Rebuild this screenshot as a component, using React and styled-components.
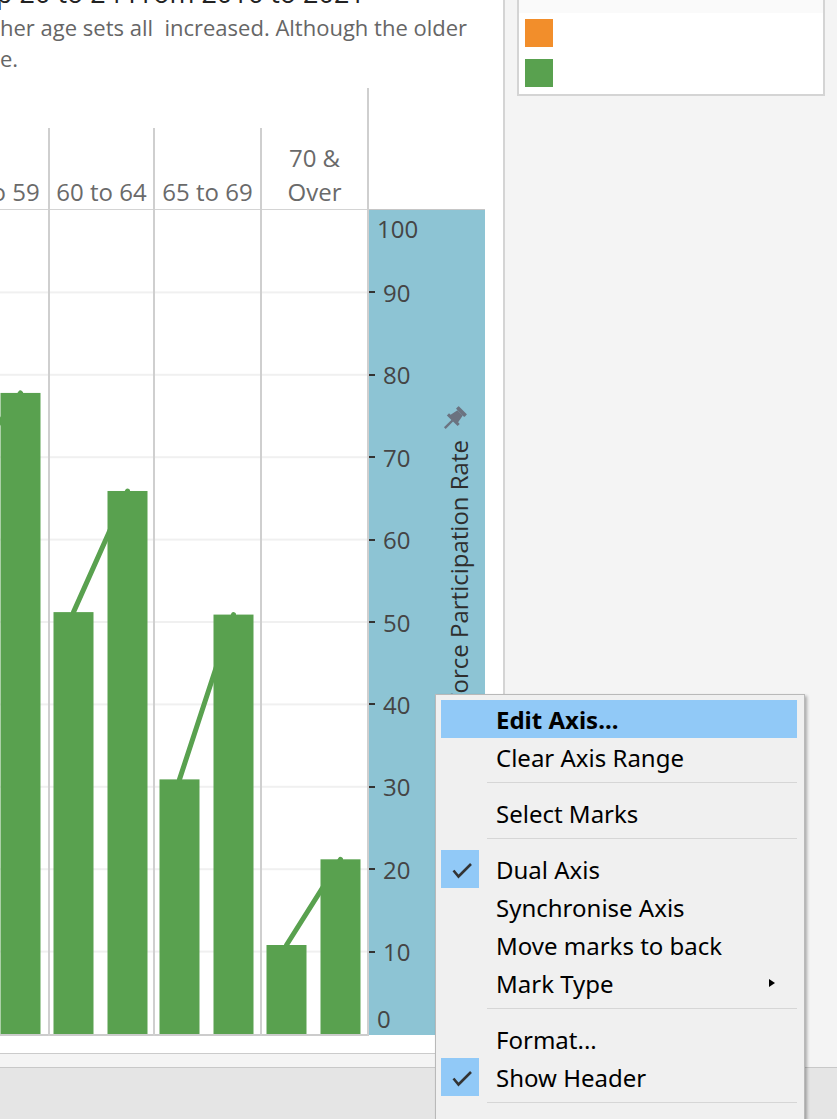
import React from 'react';
import styled, { createGlobalStyle } from 'styled-components';

const GREEN = '#59a14f';
const ORANGE = '#f28e2b';
const PLOT_H = 824;
const yOf = v => PLOT_H - (v * PLOT_H) / 100;

const panes = [
    { label: ['55 to 59'], width: 109, values: [68.6, 77.8] },
    { label: ['60 to 64'], width: 105, values: [51.2, 65.9] },
    { label: ['65 to 69'], width: 107, values: [30.9, 50.9] },
    { label: ['70 &', 'Over'], width: 107, values: [10.8, 21.2] },
];

const grid = [10, 20, 30, 40, 50, 60, 70, 80, 90];
const ticks = [100, 90, 80, 70, 60, 50, 40, 30, 20, 10, 0];

const menu = [
    { label: 'Edit Axis...', active: true },
    { label: 'Clear Axis Range' },
    'sep',
    { label: 'Select Marks' },
    'sep',
    { label: 'Dual Axis', checked: true },
    { label: 'Synchronise Axis' },
    { label: 'Move marks to back' },
    { label: 'Mark Type', submenu: true },
    'sep',
    { label: 'Format...' },
    { label: 'Show Header', checked: true },
    'sep',
];

const PanePlot = ({ width, values }) => {
    const inner = width - 2;
    const pad = (inner - 94) / 2 - 1;
    const xs = [pad, pad + 54];
    const cx = xs.map(x => x + 20);

    return (
        <PlotSvg width={inner} height={PLOT_H}>
            { grid.map(v => (
                <rect key={v} x={0} y={yOf(v) - 1} width={inner} height={2} fill="#f0f0f0" />
            )) }
            <line
                x1={cx[0]} y1={yOf(values[0])}
                x2={cx[1]} y2={yOf(values[1])}
                stroke={GREEN} strokeWidth={5} strokeLinecap="round"
            />
            { values.map((v, i) => (
                <rect key={i} x={xs[i]} y={yOf(v)} width={40} height={PLOT_H - yOf(v)} fill={GREEN} />
            )) }
        </PlotSvg>
    );
};

const PinIcon = () => (
    <Pin viewBox="0 0 24 24" width="26" height="26">
        <g transform="rotate(45 12 12)" fill="#6b7380">
            <rect x="6.5" y="0.5" width="11" height="3.5" rx="0.6" />
            <path d="M8.5 4h7l1.4 7.5H19v2.8H5v-2.8h2.1z" />
            <rect x="10.9" y="14" width="2.2" height="10" />
        </g>
    </Pin>
);

const Check = () => (
    <svg width="38" height="38" viewBox="0 0 38 38">
        <polyline points="12.5,20.5 17.5,26.5 30,14" fill="none" stroke="#333" strokeWidth="2.6" />
    </svg>
);

const App = () => {
    return (
        <Screen>
            <GlobalStyle />
            <Workspace>
                <Sheet>
                    <Title>p 20 to 24 From 2016 to 2021</Title>
                    <Subtitle>
                        her age sets all  increased. Although the older
                        <br />
                        e.
                    </Subtitle>
                    <Chart>
                        { panes.map((p, i) => (
                            <Pane key={i} width={p.width}>
                                <Header>
                                    <HeaderLabel>
                                        { p.label.map(l => <div key={l}>{ l }</div>) }
                                    </HeaderLabel>
                                </Header>
                                <Plot>
                                    <PanePlot width={p.width} values={p.values} />
                                </Plot>
                            </Pane>
                        )) }
                        <AxisColumn>
                            <AxisPanel>
                                <Ticks>
                                    { ticks.map(v => {
                                        const edge = v === 0 || v === 100;
                                        const top = Math.min(Math.max(yOf(v), 18), 808);
                                        return (
                                            <Tick key={v} style={{ top }}>
                                                <TickMark hidden={edge} />
                                                <TickLabel>{ v }</TickLabel>
                                            </Tick>
                                        );
                                    }) }
                                </Ticks>
                                <AxisTitleCol>
                                    <PinIcon />
                                    <AxisTitle>Labour Force Participation Rate</AxisTitle>
                                </AxisTitleCol>
                            </AxisPanel>
                        </AxisColumn>
                    </Chart>
                </Sheet>
                <Side>
                    <Legend>
                        <LegendHead />
                        <LegendList>
                            <Swatch color={ORANGE} />
                            <Swatch color={GREEN} />
                        </LegendList>
                    </Legend>
                </Side>
            </Workspace>
            <StatusBar />

            <Menu>
                { menu.map((m, i) => m === 'sep'
                    ? <Separator key={i} />
                    : (
                        <Item key={i} $active={m.active}>
                            <CheckSlot $checked={m.checked}>
                                { m.checked && <Check /> }
                            </CheckSlot>
                            <span>{ m.label }</span>
                            { m.submenu && <Arrow /> }
                        </Item>
                    )
                ) }
            </Menu>
        </Screen>
    );
};

export default App;

const GlobalStyle = createGlobalStyle`
    html, body {
        margin: 0;
        padding: 0;
        background: #f4f4f4;
        overflow: hidden;
    }
`;

const Screen = styled.div`
    position: relative;
    width: 837px;
    height: 1119px;
    display: flex;
    flex-direction: column;
    background: #f4f4f4;
    overflow: hidden;
    font-family: "Open Sans", "Liberation Sans", sans-serif;
`;

const Workspace = styled.div`
    display: flex;
    height: 1067px;
    flex-shrink: 0;
`;

const Sheet = styled.div`
    width: 505px;
    height: 1054px;
    box-sizing: border-box;
    flex-shrink: 0;
    background: #fff;
    border-right: 2px solid #d4d4d4;
    border-bottom: 1px solid #cbcbcb;
    overflow: hidden;
`;

const Title = styled.div`
    margin: -23px 0 0 -4px;
    font-size: 27px;
    line-height: 32px;
    color: #222;
    white-space: nowrap;
`;

const Subtitle = styled.div`
    margin-top: 3px;
    font-size: 22px;
    line-height: 31px;
    color: #666;
    white-space: pre;
`;

const Chart = styled.div`
    display: flex;
    margin: 14px 0 0 -61px;
`;

const Pane = styled.div`
    flex-shrink: 0;
    width: ${props => props.width}px;
    box-sizing: border-box;
    margin-top: 40px;
    border-left: 2px solid #cfcfcf;
`;

const Header = styled.div`
    height: 81px;
    border-bottom: 1px solid #d4d4d4;
    display: flex;
    align-items: flex-end;
    justify-content: center;
`;

const HeaderLabel = styled.div`
    font-size: 24px;
    line-height: 34px;
    color: #6a6a6a;
    text-align: center;
    white-space: nowrap;
`;

const Plot = styled.div`
    border-bottom: 2px solid #cccccc;
`;

const PlotSvg = styled.svg`
    display: block;
`;

const AxisColumn = styled.div`
    flex-shrink: 0;
    width: 118px;
    box-sizing: border-box;
    border-left: 2px solid #cfcfcf;
    padding-top: 121px;
`;

const AxisPanel = styled.div`
    display: flex;
    height: 825px;
    border-top: 1px solid #c6c6c6;
    background: #8dc4d4;
`;

const Ticks = styled.div`
    position: relative;
    width: 62px;
    flex-shrink: 0;
`;

const Tick = styled.div`
    position: absolute;
    left: 0;
    display: flex;
    align-items: center;
    height: 30px;
    margin-top: -15px;
`;

const TickMark = styled.span`
    width: 6px;
    height: 2px;
    background: ${props => props.hidden ? 'transparent' : '#333'};
`;

const TickLabel = styled.span`
    margin-left: 8px;
    font-size: 24px;
    color: #454545;
`;

const AxisTitleCol = styled.div`
    flex: 1;
    display: flex;
    flex-direction: column;
    align-items: center;
    padding-top: 196px;
`;

const Pin = styled.svg`
    display: block;
    margin-right: 8px;
    flex-shrink: 0;
`;

const AxisTitle = styled.div`
    margin-top: 8px;
    writing-mode: vertical-rl;
    transform: rotate(180deg);
    font-size: 24px;
    color: #2e2e2e;
    white-space: nowrap;
`;

const Side = styled.div`
    flex: 1;
    padding: 0 12px;
`;

const Legend = styled.div`
    width: 308px;
    box-sizing: border-box;
    margin-top: -20px;
    background: #fff;
    border: 2px solid #d4d4d4;
`;

const LegendHead = styled.div`
    height: 31px;
    background: #fafafa;
`;

const LegendList = styled.div`
    display: flex;
    flex-direction: column;
    gap: 12px;
    padding: 6px 6px 7px;
`;

const Swatch = styled.div`
    width: 28px;
    height: 28px;
    background: ${props => props.color};
`;

const StatusBar = styled.div`
    flex: 1;
    background: #e5e5e5;
    border-top: 1px solid #c8c8c8;
`;

const Menu = styled.div`
    position: absolute;
    left: 435px;
    top: 694px;
    width: 370px;
    height: 440px;
    box-sizing: border-box;
    padding: 5px 7px 0 5px;
    background: #f0f0f0;
    border: 1px solid #b9b9b9;
    box-shadow: 2px 2px 3px rgba(0, 0, 0, 0.3);
    font-family: "Noto Sans", "Open Sans", sans-serif;
    font-size: 24px;
    color: #000;
`;

const Item = styled.div`
    display: flex;
    align-items: center;
    height: 38px;
    background: ${props => props.$active ? '#91c9f7' : 'transparent'};
    font-weight: ${props => props.$active ? 700 : 400};
    white-space: nowrap;
`;

const CheckSlot = styled.div`
    width: 38px;
    height: 38px;
    flex-shrink: 0;
    margin-right: 17px;
    background: ${props => props.$checked ? '#91c9f7' : 'transparent'};
`;

const Arrow = styled.span`
    margin-left: auto;
    margin-right: 22px;
    border-left: 6px solid #000;
    border-top: 4px solid transparent;
    border-bottom: 4px solid transparent;
`;

const Separator = styled.div`
    height: 1px;
    background: #d6d6d6;
    margin: 6px 0 11px 46px;
`;
